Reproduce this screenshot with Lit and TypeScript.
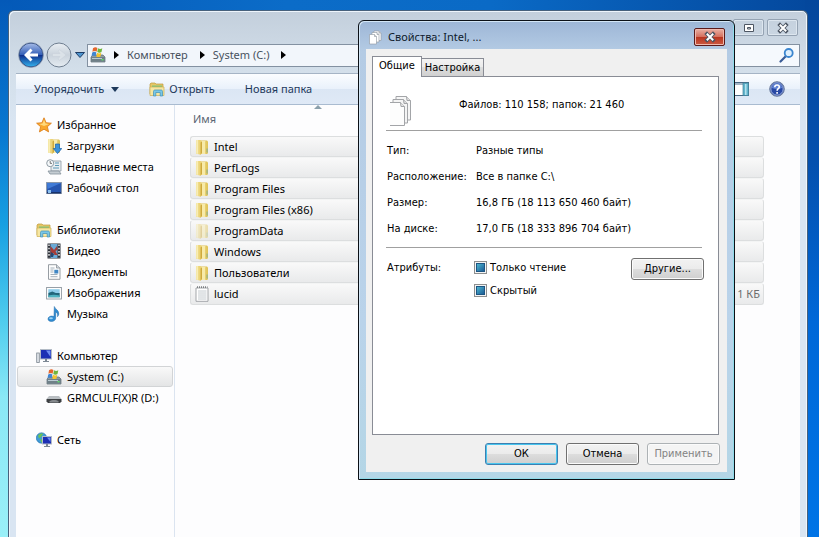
import { LitElement, html, svg, css, nothing } from "lit";
import { customElement, property } from "lit/decorators.js";

const drive = svg`
  <path d="M1 10l2-2h10l2 2v5H1z" fill="#8f9ba3" stroke="#5d6a72" stroke-width=".7"/>
  <path d="M1 10h14v4.6H1z" fill="#6f8088"/><path d="M2 11h10v1H2z" fill="#b9cbd2"/>
  <rect x="11.5" y="12" width="2" height="1.4" fill="#5fe06a"/>
  <path d="M3 1.200C4.600 0 6 0 7.400 1L6.600 4.700C5.200 3.700 3.800 3.900 2.400 4.800z" fill="#e5662d"/>
  <path d="M8 1.200c1.400 1 2.800 1 4.300.1l-.8 3.700c-1.400.9-2.800.8-4.200 0z" fill="#6fb53c"/>
  <path d="M2.200 5.500c1.400-.9 2.800-1 4.200 0L5.600 9.200C4.200 8.300 2.900 8.300 1.500 9.200z" fill="#3f86d2"/>
  <path d="M7.100 5.800c1.400.9 2.800.9 4.200 0l-.8 3.600c-1.400.9-2.800.9-4.200 0z" fill="#f3c32e"/>`;

const folder = svg`
  <path d="M6 1.500h7l1 1V14l-1 1H6z" fill="#dfc257"/>
  <path d="M7 2h4.500v13H7z" fill="#f7eaa9"/>
  <path d="M11.500 2.500h1.800v12h-1.800z" fill="#e3c861"/>
  <path d="M2.500 1h4l1.500 1.500V14l-1.500 1.800L2 14.500V1.500z" fill="#ecd478"/>
  <path d="M2.500 1h1.700v14l-2-.6V1.500z" fill="#f8edb4"/>
  <path d="M6.500 3.500L8 2.500V14l-1.500 1.800z" fill="#cfa93c"/>
  <path d="M12.300 9.500h1.700v4h-1.700z" fill="#a9b77c"/>`;

const library = svg`
  <path d="M1 3l1-1h4l1 1h7v10H1z" fill="#e6c766" stroke="#bd9b3f" stroke-width=".7"/>
  <path d="M3 4.500h10v6H3z" fill="#7fc47e"/>
  <path d="M1 6h14v8.500H1z" fill="#f6e6a2" stroke="#cdb052" stroke-width=".7"/>
  <path d="M4.500 15v-4.500c0-1 .6-1.500 1.500-1.500h6c.9 0 1.500.5 1.500 1.500V15h-2.300v-3.500H6.800V15z" fill="#79c6e6" stroke="#3f8fb8" stroke-width=".7"/>`;

const page = (x: number, y: number) => svg`
  <path d="M${x} ${y}h5l2 2v7.500h-7z" fill="#fff" stroke="#8d959e" stroke-width=".6"/>
  <path d="M${x + 5} ${y}v2h2" fill="#ddd" stroke="#8d959e" stroke-width=".6"/>`;

const screen = (x: number, y: number, w: number, h: number) => svg`
  <rect x=${x} y=${y} width=${w} height=${h} fill="#1c2fb4" stroke="#b3bbc6" stroke-width="1"/>
  <path d="M${x + w / 2} ${y + 1}h${w / 2 - 1}v${h - 3}z" fill="#6f8df0"/>
  <path d="M${x + w / 2 - 1} ${y + h}h2v2h2v1h-6v-1h2z" fill="#7d8894"/>`;

const icons: Record<string, unknown> = {
  drive,
  folder,
  library,
  star: svg`<path d="M8 .8l2.100 4.900 5.300.5-4 3.500 1.200 5.200L8 12.200l-4.600 2.700 1.200-5.200-4-3.500 5.300-.5z" fill="#f9a72b" stroke="#d97a16" stroke-width=".8"/>
    <path d="M8 2.800l1.500 3.700 3.600.4L8 9 3 6.900l3.600-.4z" fill="#ffd97c"/>`,
  downloads: svg`${folder}<path d="M9.500 6h4v4.500h2.300L11.500 15.600 7.300 10.500h2.200z" fill="#3b93dc" stroke="#1a62a8" stroke-width=".7"/>`,
  recent: svg`<path d="M5 2h10v10H5z" fill="#e8edf1" stroke="#8b98a2" stroke-width=".8"/>
    <path d="M9 4h4M9 6.500h4M7 9h6" stroke="#5c9ab8" stroke-width="1.200"/>
    <path d="M2 12h11l2 3H4z" fill="#c4ccd2" stroke="#83909a" stroke-width=".8"/>
    <circle cx="4.200" cy="4.200" r="3.500" fill="#f6f9fb" stroke="#8e9aa3"/><path d="M4.200 2v2.400H6" stroke="#555" stroke-width=".8" fill="none"/>`,
  desktop: svg`<rect x=".6" y="2.500" width="14.800" height="11" fill="#2555b0" stroke="#8694a8"/>
    <path d="M1 3h14L1.500 9z" fill="#3f7ad6"/><path d="M1 12h14v1.500H1z" fill="#18336b"/><rect x="2" y="10" width="3" height="3" fill="#8cc0ee"/>`,
  video: svg`<rect x="1.500" y=".5" width="13" height="15" fill="#2c3038"/><path d="M4.500 1h7v14h-7z" fill="#6aa9d6"/>
    <path d="M4.500 3l3.500 4 3-4 .5 4-2 1 2 4h-3l-1-2-3 2z" fill="#a63c37"/><path d="M5 9l3 2-1 3H4.500z" fill="#28466e"/>
    <path d="M3 1.500v13M13 1.500v13" stroke="#f2f2f2" stroke-width="1.400" stroke-dasharray="1.600 1.600"/>`,
  docs: svg`<path d="M2.500.7h8L14 4v11.300H2.500z" fill="#fdfdfd" stroke="#8b9299" stroke-width=".9"/><path d="M10.500.7V4H14" fill="#d5dbe0" stroke="#8b9299" stroke-width=".8"/>
    <path d="M4.500 4h4M4.500 6h3M4.500 8h3M4.500 10.500h7M4.500 12.700h7" stroke="#9aa7b2" stroke-width=".9"/><rect x="8.300" y="5.800" width="4" height="3.700" fill="#3f86c4"/>`,
  pictures: svg`<rect x=".6" y="2.500" width="14.800" height="11.500" fill="#fff" stroke="#8d969e" stroke-width=".9"/>
    <path d="M2.300 4.200h11.400v4H2.300z" fill="#8fcdea"/><path d="M2.300 8l4-1.500 3.500 1.500h3.900v4.300H2.300z" fill="#23667a"/><path d="M2.300 10.500c4-1 7-1 11.400 0v1.800H2.300z" fill="#4fb2c0"/>`,
  music: svg`<path d="M8.300.5c.6 2.500 4.700 3.500 4.500 7.500-.1 1-.7 2-1.300 2.700.6-2.500-.3-4.200-1.800-4.800V12c0 2.200-2 3.500-4.300 3.500-2 0-3.400-1-3.400-2.500s1.500-2.900 3.700-2.900c1 0 1.700.2 2.300.5z" fill="#2f8cd2" stroke="#1b66a6" stroke-width=".5"/><ellipse cx="5" cy="12.200" rx="1.900" ry="1" fill="#9bd3f5"/>`,
  computer: svg`<rect x=".7" y="5" width="2.600" height="9.500" fill="#dfe4e9" stroke="#7c8791" stroke-width=".8"/>${screen(4.5, 1.5, 11, 9.5)}`,
  dvd: svg`<path d="M3 6h10l2.500 3H.5z" fill="#b9bec2"/><path d="M.5 9h15v2.500l-1.500 1.500H2L.5 11.500z" fill="#3d4043"/><path d="M3.500 11c2-1.500 7-1.500 9 0v1.500h-9z" fill="#85898d"/>`,
  network: svg`<circle cx="5.500" cy="6" r="5.200" fill="#3f9bd8" stroke="#1f6ba8" stroke-width=".6"/><path d="M2 3.500c2-2 4-2.300 5-1.500L5 5l-2 1.500zM4 7l3 1-1.500 3z" fill="#6cc257"/>${screen(6.500, 4.500, 9, 7.500)}`,
  text: svg`<path d="M2 2h12v13.300H2z" fill="#fff" stroke="#9a9da0" stroke-width=".9"/><path d="M3 1.200h10.500" stroke="#7c8083" stroke-width="1.800" stroke-dasharray="1 1"/>
    <path d="M4 5h8.500M4 7h8.500M4 9h8.500M4 11h8.500M4 13h8.500" stroke="#b5bcc2" stroke-width=".8"/>`,
  pages: svg`${page(5, 2)}${page(3, 3.500)}${page(0.500, 5.500)}`,
  pagesLarge: svg`<g transform="scale(.5)" fill="#fdfdfd" stroke="#a3a5a8" stroke-width="1">
    <path d="M8 2.500h10.500l4 4V26H8z" fill="#f6f6f6"/><path d="M18.500 2.500l.5 4h3.500" fill="#e2e2e2"/>
    <path d="M5 5.500h10.500l4 4V29H5z" fill="#f4f4f4"/><path d="M15.500 5.500l.5 4h3.500" fill="#dcdcdc"/>
    <path d="M2 8.500h10.500l4 4V31.500H2z" stroke="none"/><path d="M2 8.500h10.500l4 4V31.500H2" fill="none"/><path d="M12.500 8.500l.5 4h3.500" fill="#e6e6e6"/></g>`,
  search: svg`<path d="M1.500 14.500l5-5" stroke="#3a5c96" stroke-width="2.200" stroke-linecap="round"/><circle cx="9.700" cy="6" r="4" fill="#dff0fd" stroke="#3b86cf" stroke-width="1.800"/>`,
  help: svg`<circle cx="8" cy="8" r="7.300" fill="#2848a4" stroke="#6f7f9c"/><circle cx="8" cy="8" r="6.200" fill="none" stroke="#a9b9e2" stroke-width=".9"/><path d="M3 7a5 4.600 0 0 1 10 0c-3 1.200-7 1.200-10 0z" fill="#5f82d4"/>
    <path d="M5.800 6.200c0-3 4.500-2.900 4.500-.2 0 1.800-2.200 1.700-2.200 3.700M8.100 11v1.700" fill="none" stroke="#fff" stroke-width="1.600"/>`,
  preview: svg`<rect x=".5" y="1.500" width="15" height="13" fill="#fff" stroke="#4b6a85"/><path d="M1 2h14v2H1z" fill="#a4b6c6"/><path d="M10 2h5.500v12.500H10z" fill="#62b5cc" stroke="#3d7f99" stroke-width=".7"/><path d="M12 3h1.500v11H12z" fill="#b4e2ee"/>`,
  close: svg`<path d="M5 5l6 6M11 5l-6 6" stroke="#4d5663" stroke-width="3.800" stroke-linecap="square"/><path d="M4.800 4.800l6.400 6.400M11.200 4.800l-6.400 6.400" stroke="#fff" stroke-width="2"/>`,
  maximize: svg`<path d="M3.500 4.500h9v7h-9z" fill="#fff" stroke="#4d5663"/><path d="M6.500 7.500h3v1.500h-3z" fill="#dbe4ee" stroke="#4d5663"/>`,
};

@customElement("win-icon")
class WinIcon extends LitElement {
  @property() name = "";
  static styles = css`
    :host { display: block; flex: none; width: 16px; height: 16px; }
    svg { display: block; width: 100%; height: 100%; }
  `;
  render() {
    return html`<svg viewBox="0 0 16 16" aria-hidden="true">${icons[this.name]}</svg>`;
  }
}

type NavItem = { label: string; icon: string; selected?: boolean };

const groups: { head: NavItem; items: NavItem[] }[] = [
  {
    head: { label: "Избранное", icon: "star" },
    items: [
      { label: "Загрузки", icon: "downloads" },
      { label: "Недавние места", icon: "recent" },
      { label: "Рабочий стол", icon: "desktop" },
    ],
  },
  {
    head: { label: "Библиотеки", icon: "library" },
    items: [
      { label: "Видео", icon: "video" },
      { label: "Документы", icon: "docs" },
      { label: "Изображения", icon: "pictures" },
      { label: "Музыка", icon: "music" },
    ],
  },
  {
    head: { label: "Компьютер", icon: "computer" },
    items: [
      { label: "System (C:)", icon: "drive", selected: true },
      { label: "GRMCULF(X)R (D:)", icon: "dvd" },
    ],
  },
  { head: { label: "Сеть", icon: "network" }, items: [] },
];

const files = [
  { name: "Intel", icon: "folder", size: "" },
  { name: "PerfLogs", icon: "folder", size: "" },
  { name: "Program Files", icon: "folder", size: "" },
  { name: "Program Files (x86)", icon: "folder", size: "" },
  { name: "ProgramData", icon: "folder", size: "", hidden: true },
  { name: "Windows", icon: "folder", size: "" },
  { name: "Пользователи", icon: "folder", size: "" },
  { name: "lucid", icon: "text", size: "1 КБ" },
];

const details = [
  ["Тип:", "Разные типы"],
  ["Расположение:", "Все в папке C:\\"],
  ["Размер:", "16,8 ГБ (18 113 650 460 байт)"],
  ["На диске:", "17,0 ГБ (18 333 896 704 байт)"],
];

@customElement("explorer-window")
class ExplorerWindow extends LitElement {
  static styles = css`
    :host {
      display: flex; flex-direction: column; box-sizing: border-box;
      padding: 0 7px; border: 1px solid #47617c; border-bottom: 0;
      border-radius: 6px 6px 0 0;
      background: linear-gradient(#c3cfdc, #d3dfea 60px, #d9e5f2 110px);
      box-shadow: inset 1px 1px 0 #eef5fc, inset -1px 0 0 #eef5fc;
      font: 11px/20px "Noto Sans", "Open Sans", sans-serif; color: #000;
    }
    button, a { font: inherit; color: inherit; text-decoration: none; }
    button { margin: 0; padding: 0; border: 0; background: none; }
    .controls { display: flex; justify-content: flex-end; gap: 3px; height: 23px; padding: 8px 2px 0 0; }
    .control {
      display: grid; place-items: center; width: 31px; height: 17px;
      border: 1px solid #95a3b3; border-radius: 2px; box-shadow: inset 0 0 0 1px #dde6ef;
    }
    .bar { display: flex; align-items: center; height: 26px; margin-bottom: 5px; padding-left: 2px; }
    .travel { display: flex; align-items: center; flex: none; width: 69px; }
    .travel svg { display: block; }
    .address {
      display: flex; align-items: center; flex: 1; gap: 8px; box-sizing: border-box; height: 23px;
      padding: 0 2px; border: 1px solid #8391a1; background: #f2f6fb; color: #48525e;
    }
    .crumb { display: flex; align-items: center; gap: 8px; margin-right: 4px; }
    .crumb::before, .more {
      content: ""; border: 4px solid transparent; border-left: 5px solid #000; border-right: 0;
    }
    .search {
      display: flex; align-items: center; flex: none; box-sizing: border-box; width: 234px; height: 23px;
      margin-left: 6px; padding-right: 4px; border: 1px solid #8391a1; background: #f5f9fd;
    }
    .search input { flex: 1; min-width: 0; border: 0; padding: 0 6px; background: none; outline: 0; font: inherit; }
    .tools {
      display: flex; align-items: center; box-sizing: border-box; height: 32px; padding: 0 15px 0 18px;
      border-top: 1px solid #a5b4c5; border-bottom: 1px solid #a9bbd0; color: #1e395b;
      background: linear-gradient(#fbfdff, #e9f1fb 50%, #dbe6f4 50%, #dfe9f6);
    }
    .tool { display: flex; align-items: center; gap: 4px; margin-right: 30px; }
    .menu { gap: 7px; }
    .caret { border: 4px solid transparent; border-top: 5px solid #1e395b; border-bottom: 0; }
    .space { flex: 1; }
    .preview { margin-right: 20px; }
    .body { display: flex; flex: 1; min-height: 0; background: #fdfdfe; }
    .nav { flex: none; box-sizing: border-box; width: 159px; padding: 9px 1px; border-right: 1px solid #dbe4f0; }
    .group { margin-bottom: 21px; }
    .item {
      display: flex; align-items: center; gap: 5px; box-sizing: border-box; height: 21px;
      padding-left: 18px; border: 1px solid transparent; border-radius: 3px; white-space: nowrap;
    }
    .child { padding-left: 28px; }
    .selected { border-color: #d2d4d6; background: linear-gradient(#f9f9f9, #e4e5e6); }
    .list { flex: 1; min-width: 0; padding: 0 36px 0 15px; }
    table { width: 100%; border-collapse: separate; border-spacing: 0; }
    th { height: 31px; padding: 0 0 7px 3px; box-sizing: border-box; font-weight: 400; text-align: left; color: #5b6573; }
    .sortable { display: grid; grid-template-columns: 121px 1fr; align-items: start; height: 24px; }
    .sortable span { align-self: end; }
    .asc { border: 4px solid transparent; border-bottom: 4px solid #8ba0ab; border-top: 0; justify-self: start; }
    td {
      height: 21px; box-sizing: border-box; padding: 0; border: solid #dcdedf; border-width: 1px 0;
      background: linear-gradient(#f9f9f9, #e9eaeb);
    }
    tr + tr td { border-top-color: #f3f4f4; }
    td:first-child { border-left-width: 1px; border-radius: 3px 0 0 3px; }
    td:last-child { border-right-width: 1px; border-radius: 0 3px 3px 0; text-align: right; padding-right: 3px; color: #6d6d6d; }
    .file { display: flex; align-items: center; gap: 4px; height: 19px; padding-left: 3px; }
    .dim { opacity: 0.45; }
  `;

  item(i: NavItem, child: boolean) {
    return html`<a href="#" class="item ${child ? "child" : ""} ${i.selected ? "selected" : ""}">
      <win-icon name=${i.icon}></win-icon><span>${i.label}</span></a>`;
  }

  render() {
    return html`
      <div class="controls">
        <button class="control" aria-label="Развернуть"><win-icon name="maximize"></win-icon></button>
        <button class="control" aria-label="Закрыть"><win-icon name="close"></win-icon></button>
      </div>
      <div class="bar">
        <div class="travel">
          <button aria-label="Назад">
            <svg width="27" height="26" viewBox="0 0 27 26">
              <defs><linearGradient id="b" x2="0" y2="1"><stop stop-color="#a8bde8"/><stop offset=".48" stop-color="#3560b8"/><stop offset=".5" stop-color="#0d2c8a"/><stop offset="1" stop-color="#35b4ee"/></linearGradient></defs>
              <circle cx="13" cy="13" r="12" fill="url(#b)" stroke="#233f78"/>
              <circle cx="13" cy="13" r="12.500" fill="none" stroke="#8fa0b8" stroke-width=".8"/>
              <path d="M6 13l6.500-6.500 2 2L11.800 11.400H20v3.200h-8.200l2.700 2.900-2 2z" fill="#fff"/>
            </svg>
          </button>
          <button aria-label="Вперед">
            <svg width="28" height="26" viewBox="0 0 28 26">
              <defs><linearGradient id="f" x2="0" y2="1"><stop stop-color="#e9eef3"/><stop offset=".5" stop-color="#cad3dc"/><stop offset="1" stop-color="#e5ecf2"/></linearGradient></defs>
              <circle cx="14" cy="13" r="12" fill="url(#f)" stroke="#6f7e90"/>
              <path d="M21 13l-6.500-5.500-1.500 2 2.200 2H7.500v3h7.700l-2.200 2 1.500 2z" fill="#dbe2e8" stroke="#c6cfd8" stroke-width=".5"/>
            </svg>
          </button>
          <button aria-label="Последние страницы">
            <svg width="14" height="12" viewBox="0 0 14 12"><path d="M2.500 3.500h9L7 8.500z" fill="#4e95cf" stroke="#1d3c66"/></svg>
          </button>
        </div>
        <div class="address">
          <win-icon name="drive"></win-icon>
          <a class="crumb" href="#">Компьютер</a>
          <a class="crumb" href="#">System (C:)</a>
          <span class="more"></span>
        </div>
        <label class="search"><input type="text" aria-label="Поиск" /><win-icon name="search"></win-icon></label>
      </div>
      <div class="tools">
        <button class="tool menu">Упорядочить<span class="caret"></span></button>
        <button class="tool"><win-icon name="library"></win-icon>Открыть</button>
        <button class="tool">Новая папка</button>
        <span class="space"></span>
        <button class="preview" aria-label="Область просмотра"><win-icon name="preview"></win-icon></button>
        <button aria-label="Справка"><win-icon name="help"></win-icon></button>
      </div>
      <div class="body">
        <nav class="nav">
          ${groups.map((g) => html`<div class="group">${this.item(g.head, false)}${g.items.map((i) => this.item(i, true))}</div>`)}
        </nav>
        <div class="list">
          <table>
            <thead><tr><th colspan="2"><div class="sortable"><span>Имя</span><i class="asc"></i></div></th></tr></thead>
            <tbody>
              ${files.map((f) => html`<tr>
                <td><div class="file"><win-icon class=${f.hidden ? "dim" : ""} name=${f.icon}></win-icon>${f.name}</div></td>
                <td>${f.size || nothing}</td>
              </tr>`)}
            </tbody>
          </table>
        </div>
      </div>
    `;
  }
}

@customElement("properties-dialog")
class PropertiesDialog extends LitElement {
  static styles = css`
    :host {
      display: block; box-sizing: border-box; width: 377px; padding: 0 7px 7px;
      border: 1px solid #0b1016; border-radius: 6px 6px 0 0;
      background: linear-gradient(#9db6d6, #b4cbe4 30px, #bad3ea 300px, #b4d6e6);
      box-shadow: inset 1px 1px 0 #d3e6f6, inset -1px -1px 0 #8fdcea;
      font: 11px/16px "DejaVu Sans Condensed", "DejaVu Sans", sans-serif; color: #000;
    }
    button { font: inherit; color: inherit; margin: 0; padding: 0; }
    .title {
      display: flex; align-items: center; gap: 3px; height: 28px; padding: 4px 2px 0 3px; box-sizing: border-box;
      font: 11px/20px "Noto Sans", "Open Sans", sans-serif; color: #101c2c;
    }
    .title span { flex: 1; }
    .close {
      display: grid; place-items: center; width: 31px; height: 18px; border: 1px solid #5b1a1a; border-radius: 2px;
      background: linear-gradient(#e9b0a4, #d5705f 48%, #b8341f 50%, #cc5a42);
      box-shadow: inset 0 0 0 1px #f0b9ae;
    }
    .client { padding: 7px 8px 7px 6px; background: #f0f0f0; }
    .tabs { display: flex; align-items: flex-end; height: 20px; }
    .tab {
      box-sizing: border-box; height: 18px; padding: 0 3px; border: 1px solid #898c95; border-left: 0; border-bottom: 0;
      background: linear-gradient(#f3f3f3, #ebebeb 50%, #dddddd 50%, #d0d0d0);
    }
    .current { position: relative; height: 21px; margin-bottom: -1px; padding: 0 6px 2px; border-left: 1px solid #898c95; background: #fff; }
    .pane { box-sizing: border-box; min-height: 359px; padding: 12px 16px 12px 13px; border: 1px solid #898c95; background: #fff; }
    .summary { display: flex; align-items: center; height: 31px; padding: 0 0 10px 2px; }
    .summary win-icon { width: 32px; height: 32px; margin-top: 11px; }
    .summary span { margin-left: 39px; }
    hr { margin: 0; border: 0; border-top: 1px solid #a0a0a0; }
    dl { display: grid; grid-template-columns: 89px 1fr; margin: 6px 0; padding-left: 1px; line-height: 27px; grid-auto-rows: 26px; }
    dd { margin: 0; }
    .attrs { display: grid; grid-template-columns: 87px 1fr 73px; padding: 8px 0 0 1px; margin-right: -2px; line-height: 23px; }
    .check { display: flex; align-items: center; gap: 3px; height: 23px; }
    .check input {
      appearance: none; box-sizing: border-box; width: 13px; height: 13px; margin: 0; border: 1px solid #8e8f8f;
      background: linear-gradient(135deg, #4cb5cf, #1c5d96) content-box; padding: 2px; outline: 0;
      box-shadow: inset 0 0 0 1px #f4f4f4, inset 0 0 0 2px #1d5583;
    }
    .btn {
      box-sizing: border-box; width: 73px; height: 22px; border: 1px solid #707070; border-radius: 3px;
      background: linear-gradient(#f2f2f2, #ebebeb 50%, #dddddd 50%, #cfcfcf); box-shadow: inset 0 0 0 1px #fbfbfb;
      line-height: 20px;
    }
    .more { margin-top: 2px; }
    .default { border-color: #3c7fb1; box-shadow: inset 0 0 0 1px #48c5ee; }
    .btn:disabled { border-color: #adb2b5; background: #f4f4f4; color: #838383; }
    .actions { display: flex; justify-content: flex-end; gap: 8px; margin: 8px -1px 0 0; }
  `;

  render() {
    return html`
      <div class="title">
        <win-icon name="pages"></win-icon><span>Свойства: Intel, ...</span>
        <button class="close" aria-label="Закрыть"><win-icon name="close"></win-icon></button>
      </div>
      <div class="client">
        <div class="tabs" role="tablist">
          <button class="tab current" role="tab" aria-selected="true">Общие</button>
          <button class="tab" role="tab" aria-selected="false">Настройка</button>
        </div>
        <div class="pane" role="tabpanel">
          <div class="summary"><win-icon name="pagesLarge"></win-icon><span>Файлов: 110 158; папок: 21 460</span></div>
          <hr />
          <dl>${details.map(([k, v]) => html`<dt>${k}</dt><dd>${v}</dd>`)}</dl>
          <hr />
          <div class="attrs">
            <span>Атрибуты:</span>
            <div>
              <label class="check"><input type="checkbox" .indeterminate=${true} />Только чтение</label>
              <label class="check"><input type="checkbox" .indeterminate=${true} />Скрытый</label>
            </div>
            <button class="btn more">Другие...</button>
          </div>
        </div>
        <div class="actions">
          <button class="btn default">ОК</button>
          <button class="btn">Отмена</button>
          <button class="btn" disabled>Применить</button>
        </div>
      </div>
    `;
  }
}

@customElement("app-root")
class AppRoot extends LitElement {
  static styles = css`
    :host {
      display: flex; position: relative; box-sizing: border-box; min-height: 100vh; padding: 10px 11px 0 8px; overflow: hidden;
      background:
        linear-gradient(#0459b8, #0877d0 24%, #18a0e2 42%, #50cdee 60%, #8ae8f6 74%, #9af0f8) left / 12px 100% no-repeat,
        linear-gradient(#04479c, #0450ae 30%, #0068d8 60%, #0074e6) right / 14px 100% no-repeat,
        linear-gradient(90deg, #0459b8, #0b6cc8 35%, #0a6ac6 60%, #04479c);
    }
    explorer-window { flex: 1; min-width: 0; }
    properties-dialog { position: absolute; left: 358px; top: 20px; }
  `;
  render() {
    return html`<explorer-window></explorer-window><properties-dialog></properties-dialog>`;
  }
}
